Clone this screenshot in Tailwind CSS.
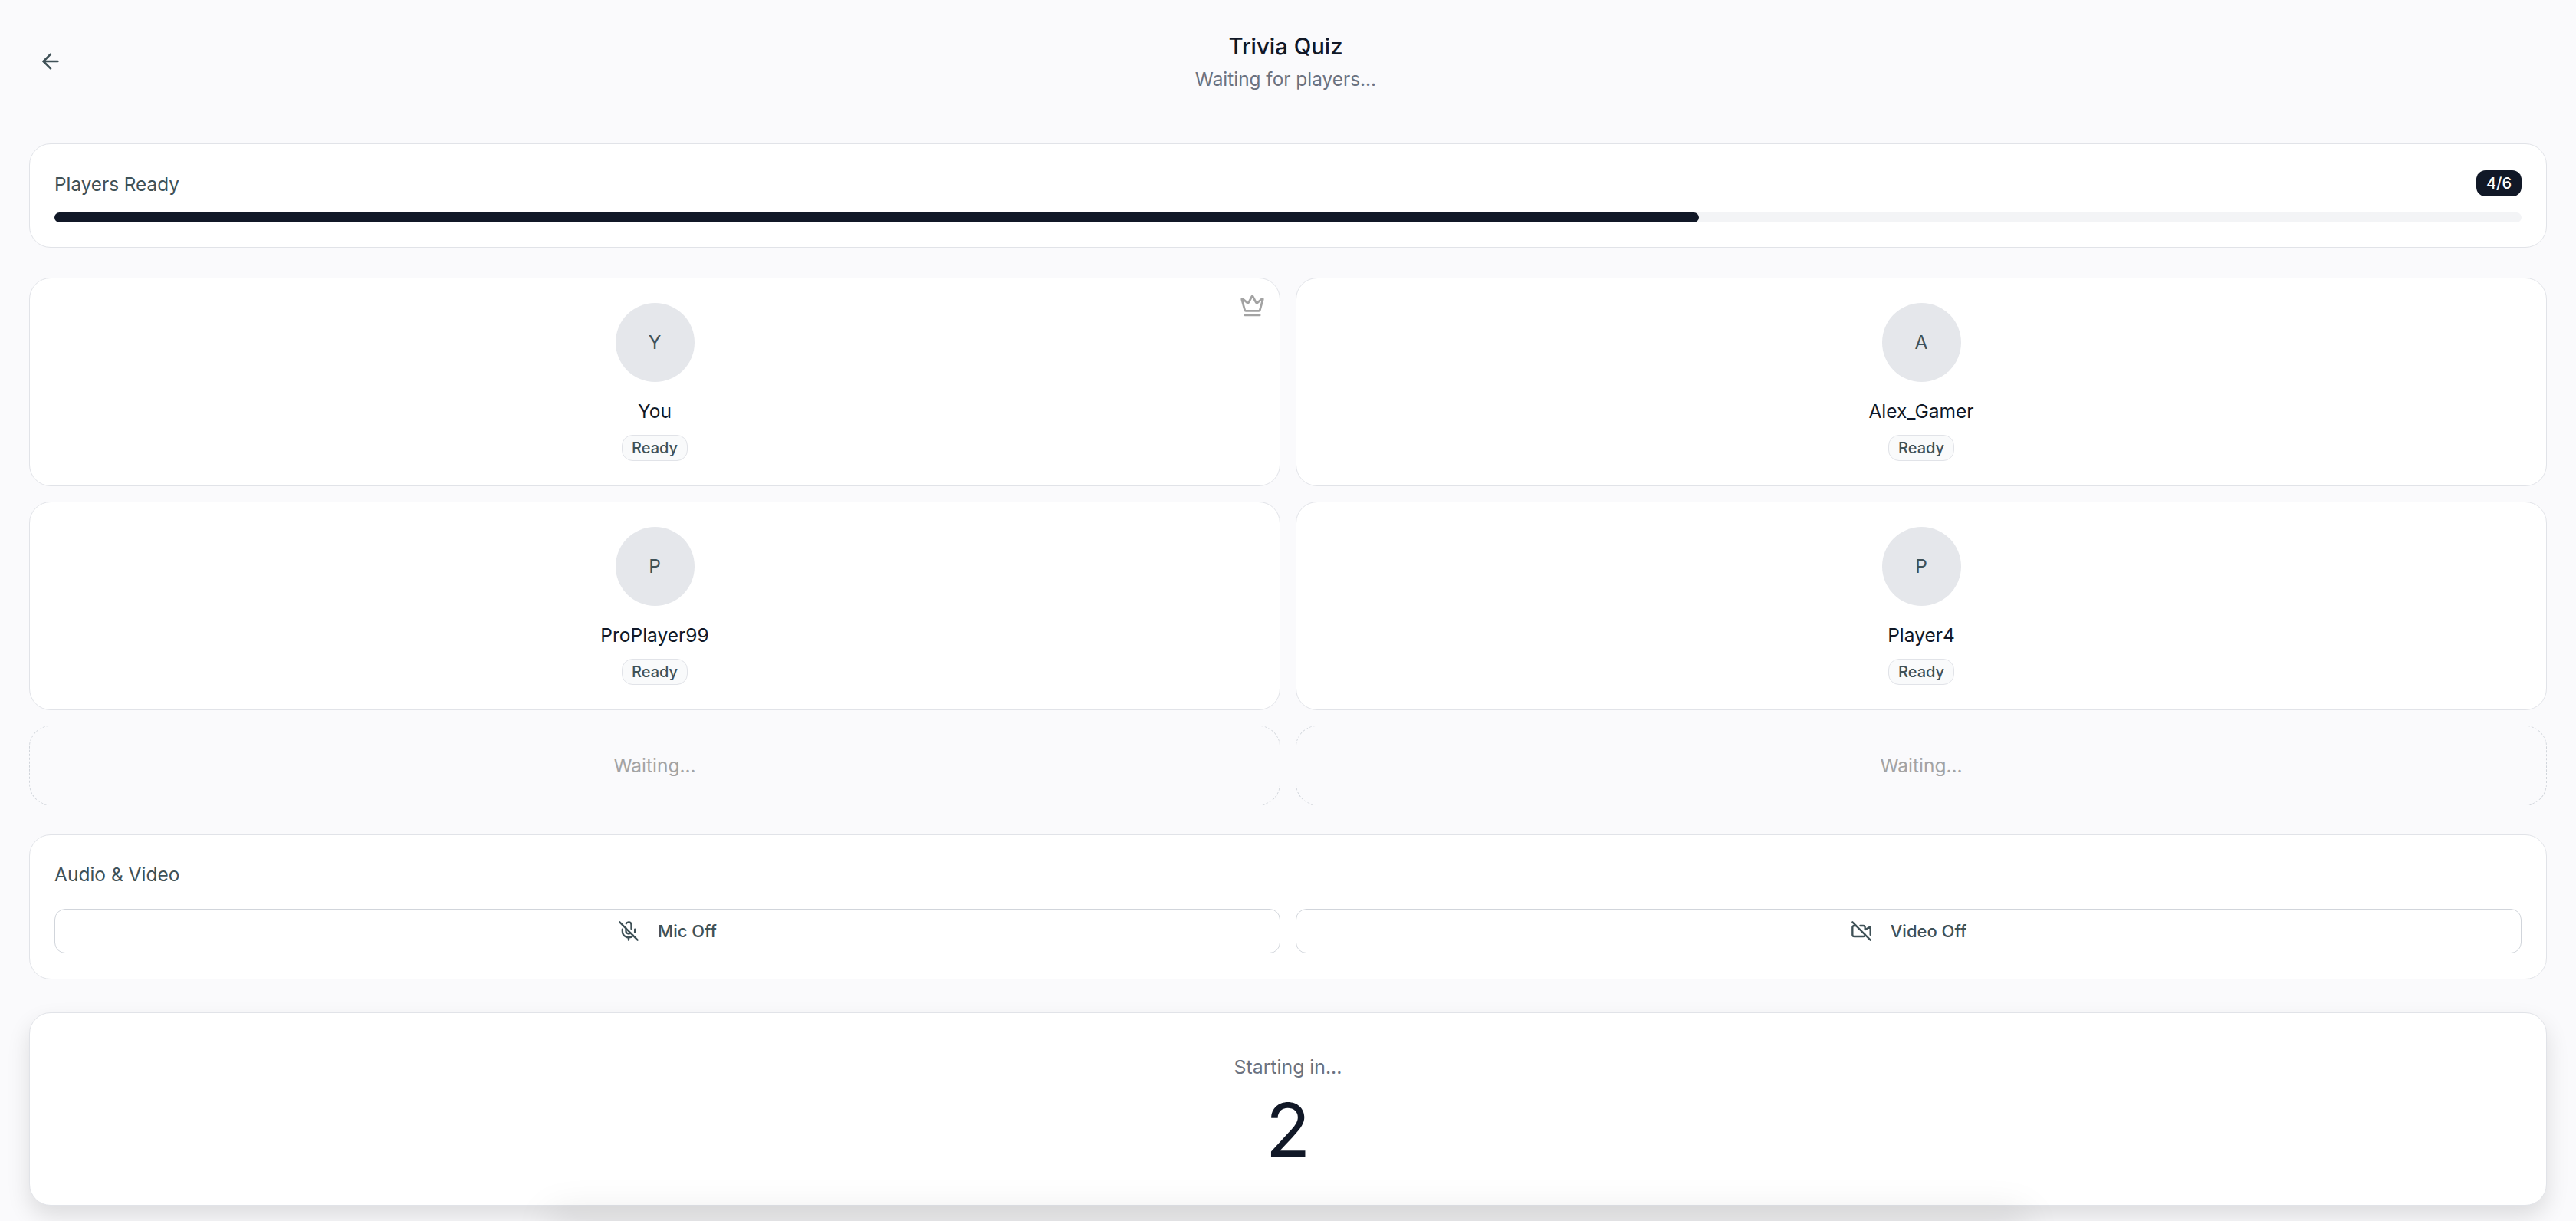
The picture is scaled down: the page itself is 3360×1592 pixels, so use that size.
<!DOCTYPE html>
<html lang="en">
<head>
    <meta charset="UTF-8">
    <title>Trivia Quiz</title>
    <script src="https://cdn.jsdelivr.net/npm/@tailwindcss/browser@4"></script>
</head>
<body class="bg-[#fafafc] h-[1592px] overflow-hidden relative font-['Inter',sans-serif] text-[#111827]">
    <header class="relative h-[187px] pt-[42px] pr-[6px] text-center">
        <button class="absolute left-[50px] top-[64px] text-[#3f5157]">
            <svg class="w-[32px] h-[32px]" viewBox="0 0 24 24" fill="none" stroke="currentColor" stroke-width="2" stroke-linecap="round" stroke-linejoin="round"><path d="m12 19-7-7 7-7"/><path d="M19 12H5"/></svg>
        </button>
        <h1 class="text-[29.3px] leading-[38px] font-medium">Trivia Quiz</h1>
        <p class="text-[24.4px] leading-[36px] text-[#6b7280] mt-[5px]">Waiting for players...</p>
    </header>

    <main class="px-[38px]">
        <section class="h-[136px] bg-white border border-[#e1e3e8] rounded-[28px] px-[32px] pt-[33px]">
            <div class="flex justify-between items-center h-[36px]">
                <span class="text-[24.3px] pt-[3px] text-[#3f5157]">Players Ready</span>
                <span class="bg-[#111827] text-white text-[20px] font-medium rounded-[12px] px-[13px] h-[34px] leading-[34px]">4/6</span>
            </div>
            <div class="mt-[20px] h-[13px] rounded-full bg-[#f3f4f6]">
                <div class="h-full w-2/3 rounded-full bg-[#111827]"></div>
            </div>
        </section>

        <section class="mt-[39px] grid grid-cols-2 gap-x-[20px] gap-y-[20px]">
            <div class="relative h-[272px] bg-white border border-[#e1e3e8] rounded-[28px] flex flex-col items-center pt-[32px]">
                <svg class="absolute right-[19px] top-[19px] w-[33px] h-[33px] text-[#a3a3a3]" viewBox="0 0 24 24" fill="none" stroke="currentColor" stroke-width="2" stroke-linecap="round" stroke-linejoin="round"><path d="M11.562 3.266a.5.5 0 0 1 .876 0L15.39 8.87a1 1 0 0 0 1.516.294L21.183 5.5a.5.5 0 0 1 .798.519l-2.834 10.246a1 1 0 0 1-.956.734H5.81a1 1 0 0 1-.957-.734L2.02 6.02a.5.5 0 0 1 .798-.519l4.276 3.664a1 1 0 0 0 1.516-.294z"/><path d="M5 21h14"/></svg>
                <div class="w-[103px] h-[103px] rounded-full bg-[#e5e7eb] flex items-center justify-center text-[24.5px] text-[#3f5157]">Y</div>
                <p class="mt-[20px] text-[24.5px] leading-[36px]">You</p>
                <span class="mt-[13px] h-[34px] px-[12px] leading-[32px] rounded-[14px] border border-[#e1e3e8] bg-[#f9fafb] text-[20px] font-medium text-[#3f5157]">Ready</span>
            </div>
            <div class="h-[272px] bg-white border border-[#e1e3e8] rounded-[28px] flex flex-col items-center pt-[32px]">
                <div class="w-[103px] h-[103px] rounded-full bg-[#e5e7eb] flex items-center justify-center text-[24.5px] text-[#3f5157]">A</div>
                <p class="mt-[20px] text-[24.5px] leading-[36px]">Alex_Gamer</p>
                <span class="mt-[13px] h-[34px] px-[12px] leading-[32px] rounded-[14px] border border-[#e1e3e8] bg-[#f9fafb] text-[20px] font-medium text-[#3f5157]">Ready</span>
            </div>
            <div class="h-[272px] bg-white border border-[#e1e3e8] rounded-[28px] flex flex-col items-center pt-[32px]">
                <div class="w-[103px] h-[103px] rounded-full bg-[#e5e7eb] flex items-center justify-center text-[24.5px] text-[#3f5157]">P</div>
                <p class="mt-[20px] text-[24.5px] leading-[36px]">ProPlayer99</p>
                <span class="mt-[13px] h-[34px] px-[12px] leading-[32px] rounded-[14px] border border-[#e1e3e8] bg-[#f9fafb] text-[20px] font-medium text-[#3f5157]">Ready</span>
            </div>
            <div class="h-[272px] bg-white border border-[#e1e3e8] rounded-[28px] flex flex-col items-center pt-[32px]">
                <div class="w-[103px] h-[103px] rounded-full bg-[#e5e7eb] flex items-center justify-center text-[24.5px] text-[#3f5157]">P</div>
                <p class="mt-[20px] text-[24.5px] leading-[36px]">Player4</p>
                <span class="mt-[13px] h-[34px] px-[12px] leading-[32px] rounded-[14px] border border-[#e1e3e8] bg-[#f9fafb] text-[20px] font-medium text-[#3f5157]">Ready</span>
            </div>
            <div class="h-[104px] border border-dashed border-[#d1d5db] rounded-[28px] flex items-center justify-center text-[24.5px] text-[#a3a3a3]">Waiting...</div>
            <div class="h-[104px] border border-dashed border-[#d1d5db] rounded-[28px] flex items-center justify-center text-[24.5px] text-[#a3a3a3]">Waiting...</div>
        </section>

        <section class="mt-[38px] h-[189px] bg-white border border-[#e1e3e8] rounded-[28px] px-[32px] pt-[32px]">
            <h2 class="text-[24.5px] leading-[38px] text-[#3f5157]">Audio &amp; Video</h2>
            <div class="mt-[26px] grid grid-cols-2 gap-[20px]">
                <button class="h-[58px] bg-white border border-[#d1d5db] rounded-[14px] flex items-center justify-center gap-[24px] text-[22px] font-medium text-[#3f5157]">
                    <svg class="w-[28px] h-[28px]" viewBox="0 0 24 24" fill="none" stroke="currentColor" stroke-width="2" stroke-linecap="round" stroke-linejoin="round"><line x1="2" x2="22" y1="2" y2="22"/><path d="M18.89 13.23A7.12 7.12 0 0 0 19 12v-2"/><path d="M5 10v2a7 7 0 0 0 12 5"/><path d="M15 9.34V5a3 3 0 0 0-5.68-1.33"/><path d="M9 9v3a3 3 0 0 0 5.12 2.12"/><line x1="12" x2="12" y1="19" y2="22"/></svg>
                    Mic Off
                </button>
                <button class="h-[58px] bg-white border border-[#d1d5db] rounded-[14px] flex items-center justify-center gap-[24px] text-[22px] font-medium text-[#3f5157]">
                    <svg class="w-[28px] h-[28px]" viewBox="0 0 24 24" fill="none" stroke="currentColor" stroke-width="2" stroke-linecap="round" stroke-linejoin="round"><path d="M10.66 6H14a2 2 0 0 1 2 2v2.5l5.248-3.062A.5.5 0 0 1 22 7.87v8.196"/><path d="M16 16a2 2 0 0 1-2 2H4a2 2 0 0 1-2-2V8a2 2 0 0 1 2-2h2"/><path d="m2 2 20 20"/></svg>
                    Video Off
                </button>
            </div>
        </section>

        <section class="mt-[43px] h-[252px] bg-white border border-[#e1e3e8] rounded-[28px] shadow-[0_14px_30px_rgba(0,0,0,0.12)] text-center pt-[52px]">
            <p class="text-[24.8px] leading-[36px] text-[#6b7280]">Starting in...</p>
            <p class="mt-[16px] text-[96px] leading-[96px]">2</p>
        </section>
    </main>

    <!-- shadow of something sitting just below the fold -->
    <div class="absolute left-[718px] right-[718px] top-[1592px] h-[40px] shadow-[0_-10px_50px_rgba(0,0,0,0.10)]"></div>
</body>
</html>
